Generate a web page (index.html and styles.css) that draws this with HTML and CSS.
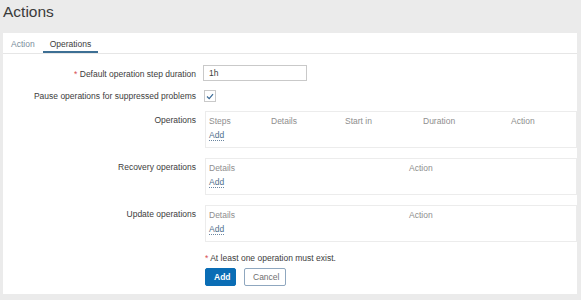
FILE: index.html
```html
<!DOCTYPE html>
<html lang="en">
<head>
  <meta charset="UTF-8" />
  <meta name="viewport" content="width=device-width, initial-scale=1" />
  <title>Actions</title>
  <link rel="stylesheet" href="styles.css">
</head>
<body>
  <header class="page-header">
    <h1>Actions</h1>
  </header>

  <div class="panel">
    <ul class="tabs">
      <li class="tab">Action</li>
      <li class="tab active">Operations</li>
    </ul>

    <form class="form">
      <div class="row">
        <label class="row-label"><span class="req">*</span> Default operation step duration</label>
        <div class="row-field">
          <input type="text" class="text-input" value="1h" />
        </div>
      </div>

      <div class="row row-check">
        <label class="row-label">Pause operations for suppressed problems</label>
        <div class="row-field">
          <span class="checkbox">
            <svg width="8" height="7" viewBox="0 0 8 7"><path d="M1 3.5 L3.2 5.6 L7 1.2" fill="none" stroke="#3a6a96" stroke-width="1.2"/></svg>
          </span>
        </div>
      </div>

      <div class="row row-table">
        <label class="row-label">Operations</label>
        <div class="row-field">
          <div class="op-box">
            <div class="op-head op-five">
              <span>Steps</span><span>Details</span><span>Start in</span><span>Duration</span><span>Action</span>
            </div>
            <a class="link-add">Add</a>
          </div>
        </div>
      </div>

      <div class="row row-table">
        <label class="row-label">Recovery operations</label>
        <div class="row-field">
          <div class="op-box">
            <div class="op-head op-two">
              <span>Details</span><span>Action</span>
            </div>
            <a class="link-add">Add</a>
          </div>
        </div>
      </div>

      <div class="row row-table">
        <label class="row-label">Update operations</label>
        <div class="row-field">
          <div class="op-box">
            <div class="op-head op-two">
              <span>Details</span><span>Action</span>
            </div>
            <a class="link-add">Add</a>
          </div>
        </div>
      </div>

      <div class="row row-note">
        <span class="row-label"></span>
        <div class="row-field note"><span class="req">*</span> At least one operation must exist.</div>
      </div>

      <div class="row row-buttons">
        <span class="row-label"></span>
        <div class="row-field buttons">
          <button type="button" class="btn-primary">Add</button>
          <button type="button" class="btn-alt">Cancel</button>
        </div>
      </div>
    </form>
  </div>
</body>
</html>
```

FILE: styles.css
```css
html, body {
  margin: 0;
  padding: 0;
}
body {
  font-family: "Liberation Sans", Arial, sans-serif;
  font-size: 8.5px;
  color: #3c3c3c;
  background-color: #ebebeb;
  width: 581px;
  height: 300px;
  overflow: hidden;
}
.page-header {
  height: 33px;
  padding: 0 0 0 3px;
}
.page-header h1 {
  margin: 0;
  padding-top: 2px;
  font-size: 15.5px;
  font-weight: normal;
  color: #3a3a3a;
  line-height: 20px;
}
.panel {
  background: #fff;
  margin: 0 4px 0 3px;
  height: 261px;
  box-sizing: border-box;
}
.tabs {
  list-style: none;
  margin: 0;
  padding: 0 0 0 4px;
  display: flex;
  border-bottom: 1px solid #e6e6e6;
  height: 20px;
}
.tab {
  padding: 6px 4px 0;
  margin-right: 4px;
  color: #7a8d9c;
}
.tab.active {
  color: #3c3c3c;
  border-bottom: 2px solid #3d6f94;
  padding: 6px 7px 0;
}
.form {
  padding-top: 11px;
}
.row {
  display: flex;
  align-items: flex-start;
}
.row-label {
  width: 200px;
  flex: none;
  text-align: right;
  padding-right: 7px;
  box-sizing: border-box;
  color: #3c3c3c;
}
.row-field {
  flex: 1;
}
.req {
  color: #d64e4e;
}
.row:first-child .row-label {
  padding-top: 4px;
}
.text-input {
  width: 104px;
  height: 16px;
  box-sizing: border-box;
  border: 1px solid #c9c9c9;
  padding: 0 5px;
  font: inherit;
  color: #3c3c3c;
}
.row-check {
  margin-top: 9px;
  align-items: center;
}
.checkbox {
  display: inline-flex;
  align-items: center;
  justify-content: center;
  width: 10px;
  height: 10px;
  border: 1px solid #c9c9c9;
  margin-left: 1px;
}
.row-table {
  margin-top: 9px;
}
.row-table + .row-table {
  margin-top: 10px;
}
.row-table .row-label {
  padding-top: 4px;
}
.op-box {
  border: 1px solid #ececec;
  margin-left: 2px;
  height: 37px;
  box-sizing: border-box;
  padding: 4px 3px 0;
}
.op-head {
  display: grid;
  color: #8e8e8e;
  height: 14px;
}
.op-five {
  grid-template-columns: 62px 74px 78px 88px auto;
}
.op-two {
  grid-template-columns: 200px auto;
}
.link-add {
  color: #4f6f8d;
  border-bottom: 1px dotted #6b86a0;
  line-height: 10px;
  display: inline-block;
}
.row-note {
  margin-top: 11px;
}
.note {
  padding-left: 2px;
  color: #3c3c3c;
}
.row-buttons {
  margin-top: 5px;
}
.buttons {
  display: flex;
  gap: 8px;
  padding-left: 2px;
}
.buttons button {
  font: inherit;
  height: 18px;
  box-sizing: border-box;
  border-radius: 2px;
  padding: 0 8px;
}
.btn-primary {
  background: #0a6db5;
  color: #fff;
  border: 1px solid #0a6db5;
  font-weight: bold !important;
  width: 31px;
}
.btn-alt {
  background: #fff;
  color: #6f6f6f;
  border: 1px solid #8fa7bf;
  width: 42px;
}
```
